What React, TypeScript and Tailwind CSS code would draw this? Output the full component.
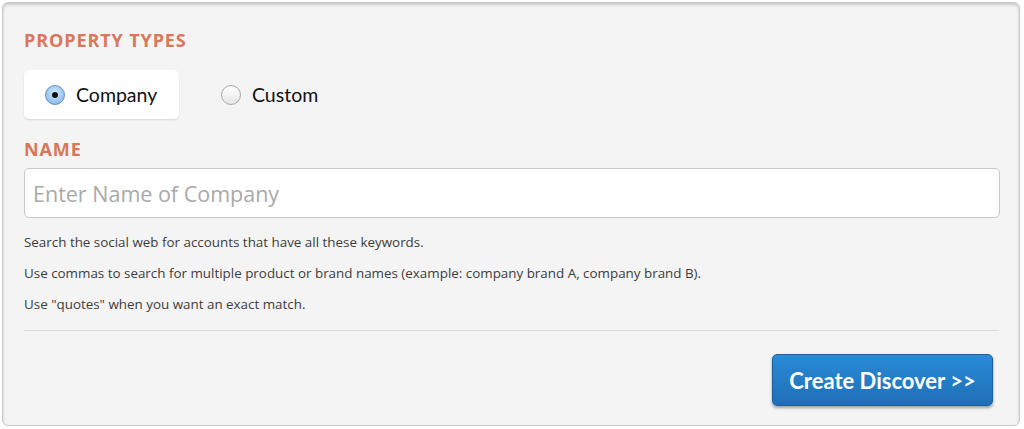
import React, { useState } from "react";

function Radio({ checked }: { checked: boolean }) {
  return (
    <span
      className={
        "flex h-[20px] w-[20px] items-center justify-center rounded-full border " +
        (checked
          ? "border-[#6d8fb8] bg-[radial-gradient(circle_at_50%_40%,#d8ecff_0%,#8cc0f3_70%,#6aa6e6_100%)]"
          : "border-[#a8a8a8] bg-[linear-gradient(#ffffff,#e6e6e6)]")
      }
    >
      {checked && <span className="h-[6px] w-[6px] rounded-full bg-[#111]" />}
    </span>
  );
}

export default function App() {
  const [type, setType] = useState<"company" | "custom">("company");
  return (
    <div className="h-[429px] w-[1024px] bg-white p-[2px] pr-[4px] pb-[3px] font-['Lato',sans-serif]">
      <div className="flex h-full flex-col rounded-[6px] border border-[#c9c9c9] bg-[#f4f4f4] px-[21px] pt-[26px] shadow-[inset_0_2px_3px_rgba(0,0,0,0.18)]">
        <h2 className="font-['Open_Sans',sans-serif] text-[18px] font-bold leading-[22px] tracking-[0.9px] text-[#d9775a]">PROPERTY TYPES</h2>
        <div className="mt-[19px] flex items-center">
          <button
            onClick={() => setType("company")}
            className={
              "flex h-[49px] w-[155px] items-center gap-[11px] rounded-[5px] pl-[21px] " +
              (type === "company" ? "bg-white shadow-[0_1px_2px_rgba(0,0,0,0.12)]" : "")
            }
          >
            <Radio checked={type === "company"} />
            <span className="text-[19.5px] text-[#111]">Company</span>
          </button>
          <button
            onClick={() => setType("custom")}
            className={
              "ml-[21px] flex h-[49px] items-center gap-[11px] rounded-[5px] px-[21px] " +
              (type === "custom" ? "bg-white shadow-[0_1px_2px_rgba(0,0,0,0.12)]" : "")
            }
          >
            <Radio checked={type === "custom"} />
            <span className="text-[19.5px] text-[#111]">Custom</span>
          </button>
        </div>
        <h2 className="mt-[19px] font-['Open_Sans',sans-serif] text-[18px] font-bold leading-[22px] tracking-[0.9px] text-[#d9775a]">NAME</h2>
        <input
          className="mt-[8px] h-[50px] w-[976px] rounded-[5px] border border-[#c8c8c8] bg-white px-[8px] font-['Open_Sans',sans-serif] text-[21.5px] text-[#333] outline-none placeholder:text-[#a9a9a9]"
          placeholder="Enter Name of Company"
        />
        <div className="mt-[15px] flex flex-col gap-[13px] font-['Open_Sans',sans-serif] text-[13.4px] leading-[18px] text-[#3c3c3c]">
          <p>Search the social web for accounts that have all these keywords.</p>
          <p>Use commas to search for multiple product or brand names (example: company brand A, company brand B).</p>
          <p>Use "quotes" when you want an exact match.</p>
        </div>
        <div className="mt-[17px] h-px w-[975px] bg-[#dcdcdc]" />
        <div className="flex w-[969px] justify-end pt-[23px]">
          <button className="h-[52px] w-[221px] rounded-[5px] border border-[#1d5f9e] bg-[linear-gradient(#2a8ad6,#1f6fb7)] text-[22px] font-bold text-white shadow-[0_2px_3px_rgba(0,0,0,0.35)]">
            Create Discover &gt;&gt;
          </button>
        </div>
      </div>
    </div>
  );
}
